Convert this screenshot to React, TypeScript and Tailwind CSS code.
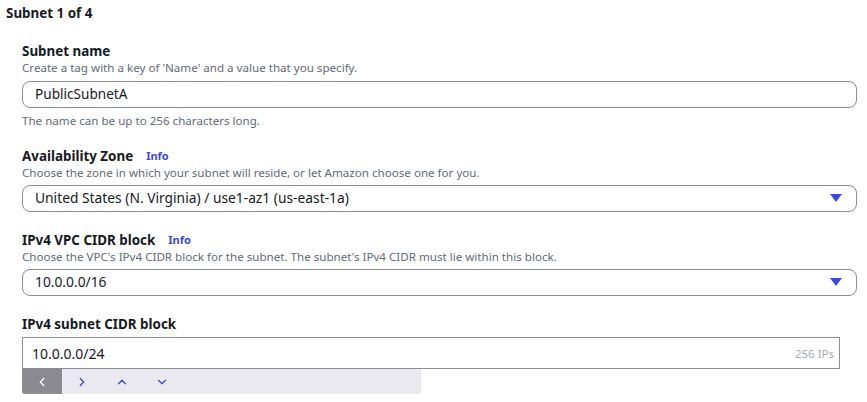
import { ChevronLeft, ChevronRight, ChevronUp, ChevronDown } from 'lucide-react';

const font = { fontFamily: '"Noto Sans", "Open Sans", sans-serif' };

function Label({ text, info }: { text: string; info?: boolean }) {
  return (
    <div className="flex items-center gap-[13px] text-[13.4px] font-bold leading-[18px] text-[#16191f]">
      <span>{text}</span>
      {info && <span className="text-[11px] font-bold text-[#3b48e0]">Info</span>}
    </div>
  );
}

function Desc({ text }: { text: string }) {
  return <p className="text-[11.6px] leading-[16px] text-[#5f6b7a]">{text}</p>;
}

function Select({ value }: { value: string }) {
  return (
    <div className="mt-[4px] flex h-[27px] items-center justify-between rounded-[8px] border border-[#8c8c94] pl-[12px] pr-[14px] text-[13.8px] text-[#16191f]">
      <span>{value}</span>
      <svg width="12" height="9" viewBox="0 0 12 9" aria-hidden>
        <path d="M0 0h12L6 8z" fill="#3b48e0" />
      </svg>
    </div>
  );
}

export default function App() {
  return (
    <div className="h-[402px] w-[867px] bg-white text-[#16191f]" style={font}>
      <div className="px-[6px] pt-[4px] text-[13.4px] font-bold leading-[18px]">Subnet 1 of 4</div>

      <div className="pl-[22px] pr-[10px] pt-[20px]">
        {/* Subnet name */}
        <Label text="Subnet name" />
        <Desc text="Create a tag with a key of 'Name' and a value that you specify." />
        <div className="mt-[5px] flex h-[27px] items-center rounded-[8px] border border-[#8c8c94] px-[12px] text-[13.6px]">
          PublicSubnetA
        </div>
        <p className="mt-[5px] text-[11.6px] leading-[16px] text-[#5f6b7a]">The name can be up to 256 characters long.</p>

        {/* Availability Zone */}
        <div className="mt-[18px]">
          <Label text="Availability Zone" info />
          <Desc text="Choose the zone in which your subnet will reside, or let Amazon choose one for you." />
          <Select value="United States (N. Virginia) / use1-az1 (us-east-1a)" />
        </div>

        {/* VPC CIDR */}
        <div className="mt-[19px]">
          <Label text="IPv4 VPC CIDR block" info />
          <Desc text="Choose the VPC's IPv4 CIDR block for the subnet. The subnet's IPv4 CIDR must lie within this block." />
          <Select value="10.0.0.0/16" />
        </div>

        {/* Subnet CIDR */}
        <div className="mt-[19px] pr-[17px]">
          <Label text="IPv4 subnet CIDR block" />
          <div className="mt-[4px] flex h-[32px] items-center justify-between border border-[#8c8c94] pl-[9px] pr-[5px] pt-[1px]">
            <span className="text-[14px]">10.0.0.0/24</span>
            <span className="text-[11.5px] text-[#a4abb5]">256 IPs</span>
          </div>
          <div className="flex h-[25px] w-[399px] overflow-hidden rounded-b-[3px] bg-[#ebe9f0]">
            <button className="grid w-[40px] place-items-center bg-[#8a8a90] text-white">
              <ChevronLeft className="h-[14px] w-[14px]" strokeWidth={2.25} />
            </button>
            <button className="grid w-[40px] place-items-center text-[#3b48e0]">
              <ChevronRight className="h-[14px] w-[14px]" strokeWidth={2.25} />
            </button>
            <button className="grid w-[40px] place-items-center text-[#3b48e0]">
              <ChevronUp className="h-[14px] w-[14px]" strokeWidth={2.25} />
            </button>
            <button className="grid w-[40px] place-items-center text-[#3b48e0]">
              <ChevronDown className="h-[14px] w-[14px]" strokeWidth={2.25} />
            </button>
          </div>
        </div>
      </div>
    </div>
  );
}
